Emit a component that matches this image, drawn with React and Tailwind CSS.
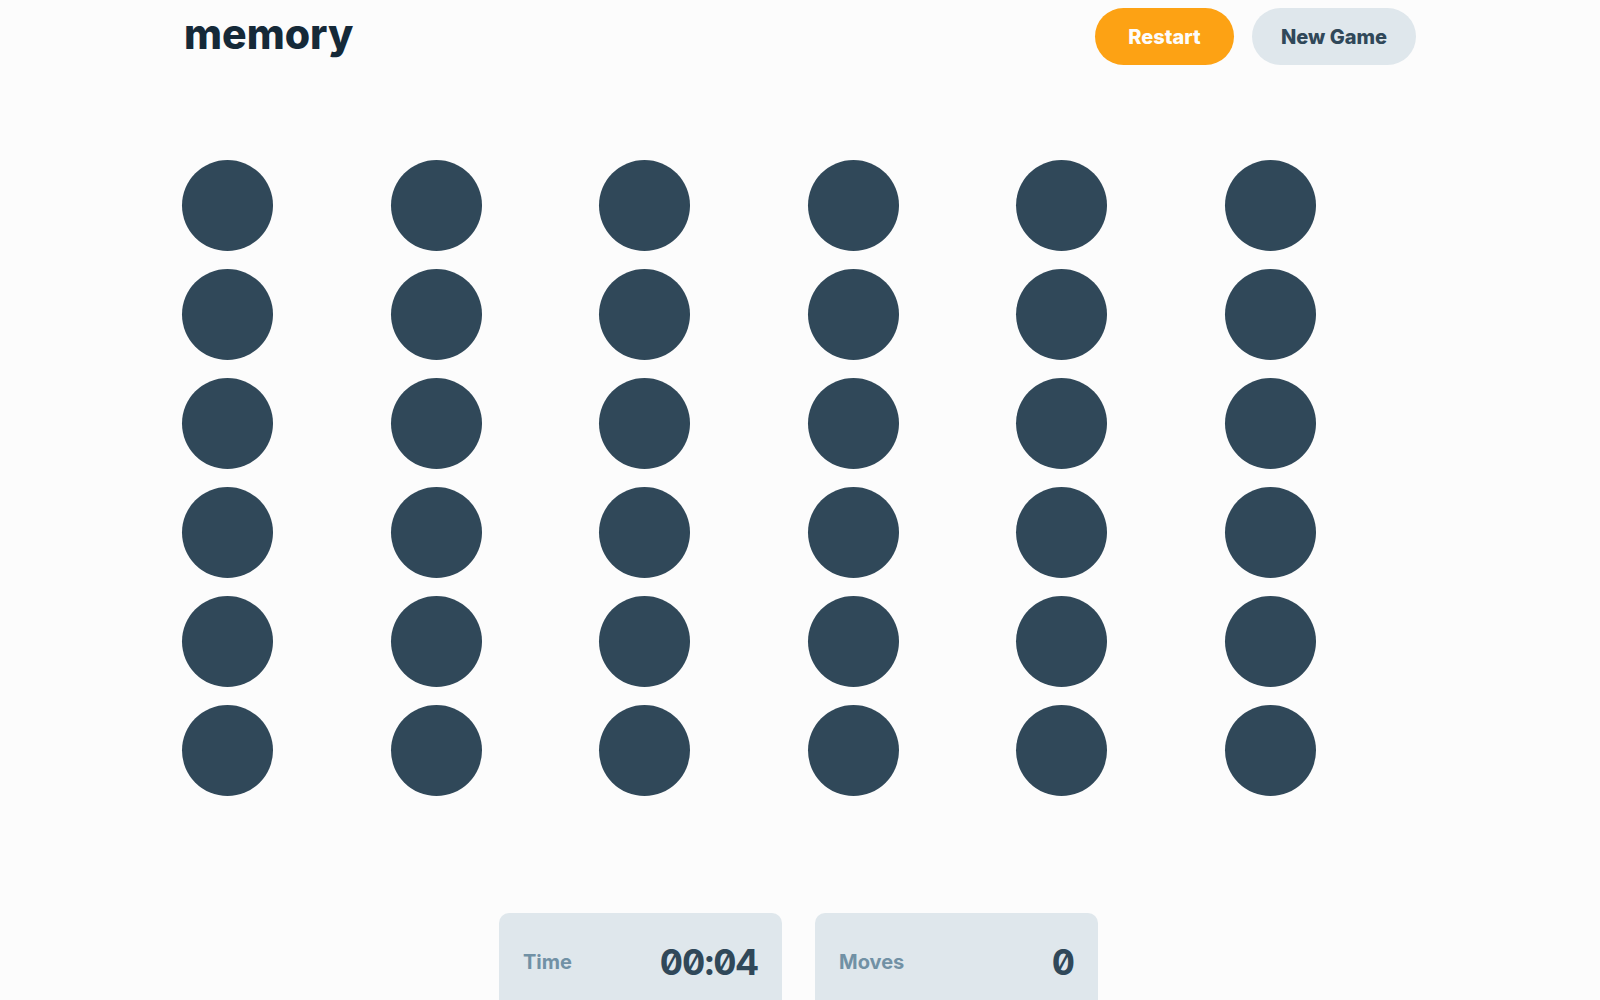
const circles = Array.from({ length: 36 }, (_, i) => i);

function Stat({ label, value }) {
  return (
    <div className="w-[283px] h-[98px] rounded-[10px] bg-[#dfe7ec] flex items-center justify-between px-6">
      <span className="text-[20px] font-bold text-[#7191a5]">{label}</span>
      <span className="text-[36px] font-bold text-[#304859] slashed-zero tabular-nums tracking-tight">
        {value}
      </span>
    </div>
  );
}

export default function App() {
  return (
    <div
      className="w-full h-[1000px] overflow-hidden bg-[#fcfcfc]"
      style={{ fontFamily: "Inter, 'Noto Sans', sans-serif" }}
    >
      <div className="w-[1232px] mx-auto">
        <header className="flex items-center justify-between pt-2">
          <h1 className="text-[41px] font-extrabold text-[#152938] leading-none pb-1">
            memory
          </h1>
          <div className="flex items-center gap-[18px]">
            <button className="h-[57px] w-[139px] rounded-full bg-[#fda214] text-[#fcfcfc] text-[20px] font-extrabold">
              Restart
            </button>
            <button className="h-[57px] w-[164px] rounded-full bg-[#dfe7ec] text-[#304859] text-[20px] font-extrabold">
              New Game
            </button>
          </div>
        </header>

        <div className="grid grid-cols-[repeat(6,91px)] gap-x-[117.6px] gap-y-[18px] mt-[95px] -ml-[2px]">
          {circles.map((i) => (
            <div key={i} className="w-[91px] h-[91px] rounded-full bg-[#304859]" />
          ))}
        </div>

        <div className="flex justify-center gap-[33px] mt-[117px] pr-[3px]">
          <Stat label="Time" value="00:04" />
          <Stat label="Moves" value="0" />
        </div>
      </div>
    </div>
  );
}
